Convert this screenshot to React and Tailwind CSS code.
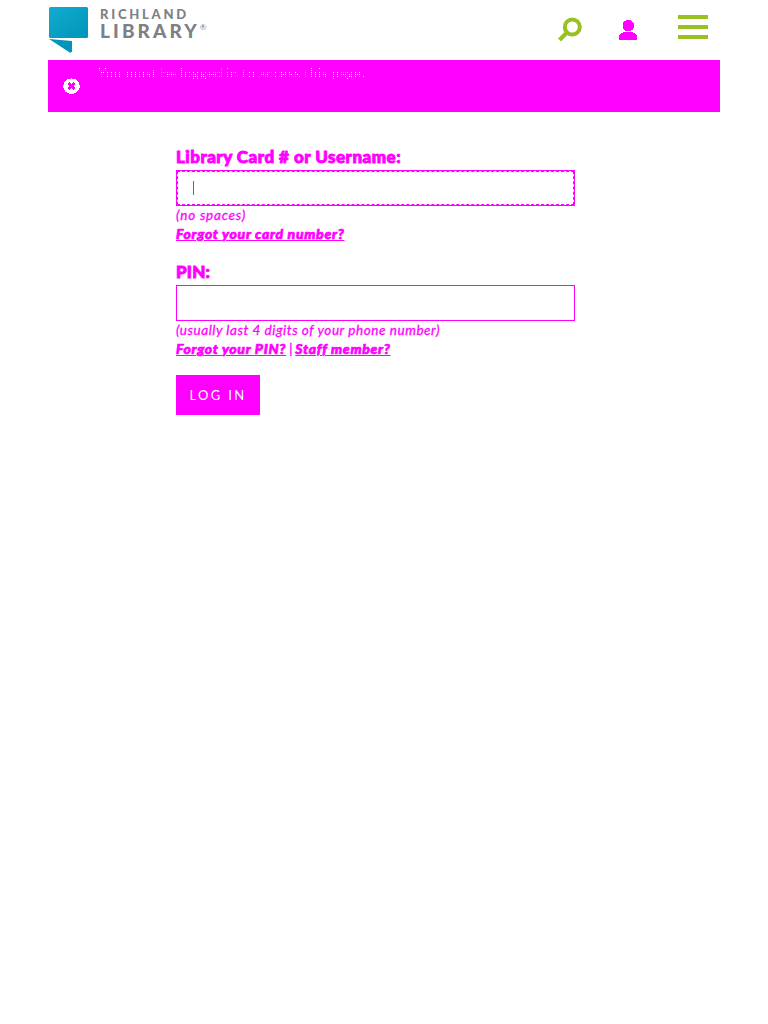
import React from 'react';

function Logo() {
  return (
    <div className="flex h-[60px] w-[165px]">
      <svg className="mt-[6px] h-[48px] w-[42px] shrink-0" viewBox="0 0 42 48">
        <defs>
          <linearGradient id="brand" x1="0" y1="0" x2="1" y2="1">
            <stop offset="0" stopColor="#12abce" />
            <stop offset="1" stopColor="#0095ba" />
          </linearGradient>
        </defs>
        <rect x="1" y="1" width="39" height="31" rx="1.5" fill="url(#brand)" />
        <path d="M1 33L24 35V45.5Q23 47.5 21 46Z" fill="#0096b9" />
      </svg>
      <div className="ml-[10px] pt-[6px] font-['Lato',sans-serif] font-bold whitespace-nowrap text-[#7d8085]">
        <div className="h-[13px] text-[13px] leading-[16px] font-black tracking-[2.75px]">RICHLAND</div>
        <div className="flex text-[19px] leading-[24px] font-black tracking-[3.1px]">
          LIBRARY<span className="text-[8px] leading-[16px] font-normal tracking-normal">®</span>
        </div>
      </div>
    </div>
  );
}

function Header() {
  return (
    <header className="flex h-[60px] justify-between pr-[12px]">
      <Logo />
      <div className="flex">
        <svg className="mt-[17px] mr-[37px] h-[26px] w-[25px]" viewBox="0 0 25 26" fill="none" stroke="#99c221">
          <circle cx="15.3" cy="10" r="7.5" strokeWidth="4" />
          <path d="M10 15.5L2.5 23" strokeWidth="4.2" />
        </svg>
        <svg className="mt-[19px] mr-[41px] h-[21px] w-[18px]" viewBox="0 0 18 21" fill="#f0f" shapeRendering="crispEdges">
          <circle cx="9.3" cy="6.6" r="5.8" />
          <path d="M0 21V17Q0 15 3 14L5 13H13L15 14Q18 15 18 17V21Z" />
        </svg>
        <div className="mt-[15px] flex h-[24px] w-[30px] flex-col justify-between">
          <span className="h-[4px] bg-[#99c221]" />
          <span className="h-[4px] bg-[#99c221]" />
          <span className="h-[4px] bg-[#99c221]" />
        </div>
      </div>
    </header>
  );
}

function Alert() {
  return (
    <div className="flex h-[52px] bg-[#f0f] pl-[15px] text-white">
      <svg className="mt-[18px] h-[17px] w-[17px]" viewBox="0 0 17 17" shapeRendering="crispEdges">
        <ellipse cx="8.5" cy="8.2" rx="8.3" ry="7.8" fill="white" />
        <path d="M5.7 5.2L11.3 10.8M11.3 5.2L5.7 10.8" stroke="#f0f" strokeWidth="3" />
      </svg>
      <p className="ml-[18px] pt-[3px] font-['Lato',sans-serif] text-[14px] leading-[20px] tracking-[0.25px] whitespace-nowrap [mask-image:conic-gradient(#000_0_25%,#0000_25%_100%)] [mask-size:2px_2px]">
        You must be logged in to access this page.
      </p>
    </div>
  );
}

function LoginForm() {
  return (
    <form className="ml-[128px] flex w-[399px] flex-col items-start pt-[36px] font-['Lato',sans-serif] text-[#f0f]">
      <label className="h-[22px] text-[17px] leading-[18px] font-black tracking-[0.47px] whitespace-nowrap [-webkit-text-stroke:0.9px_#f0f]">Library Card # or Username:</label>
      <div className="h-[36px] w-full border border-[#f0f]">
        <div className="flex h-full items-center border border-dashed border-[#f0f] pl-[15px]">
          <span className="h-[14px] w-px bg-[#f0f]" />
        </div>
      </div>
      <p className="h-[19px] text-[13.5px] leading-[19px] tracking-[0.8px] whitespace-nowrap italic [-webkit-text-stroke:0.3px_#f0f]">(no spaces)</p>
      <a className="h-[19px] text-[14px] leading-[17px] font-black tracking-[0.7px] whitespace-nowrap italic underline [-webkit-text-stroke:0.7px_#f0f] [text-decoration-thickness:1px]">Forgot your card number?</a>
      <label className="mt-[19px] h-[22px] text-[17px] leading-[18px] font-black tracking-[0.2px] [-webkit-text-stroke:0.9px_#f0f]">PIN:</label>
      <div className="h-[36px] w-full border border-[#f0f]" />
      <p className="h-[19px] text-[13.5px] leading-[19px] tracking-[0.57px] whitespace-nowrap italic [-webkit-text-stroke:0.3px_#f0f]">(usually last 4 digits of your phone number)</p>
      <p className="h-[19px] text-[14px] leading-[17px] whitespace-nowrap italic">
        <a className="font-black tracking-[0.68px] underline [-webkit-text-stroke:0.7px_#f0f] [text-decoration-thickness:1px]">Forgot your PIN?</a><span className="tracking-[-0.3px] [-webkit-text-stroke:0.3px_#f0f]"> | </span><a className="font-black tracking-[0.7px] underline [-webkit-text-stroke:0.7px_#f0f] [text-decoration-thickness:1px]">Staff member?</a>
      </p>
      <button type="button" className="mt-[16px] h-[40px] w-[84px] bg-[#f0f] pt-[2px] text-[13px] tracking-[2.3px] whitespace-nowrap text-white">LOG IN</button>
    </form>
  );
}

export default function App() {
  return (
    <main className="min-h-screen bg-white px-[48px]">
      <Header />
      <Alert />
      <LoginForm />
    </main>
  );
}
